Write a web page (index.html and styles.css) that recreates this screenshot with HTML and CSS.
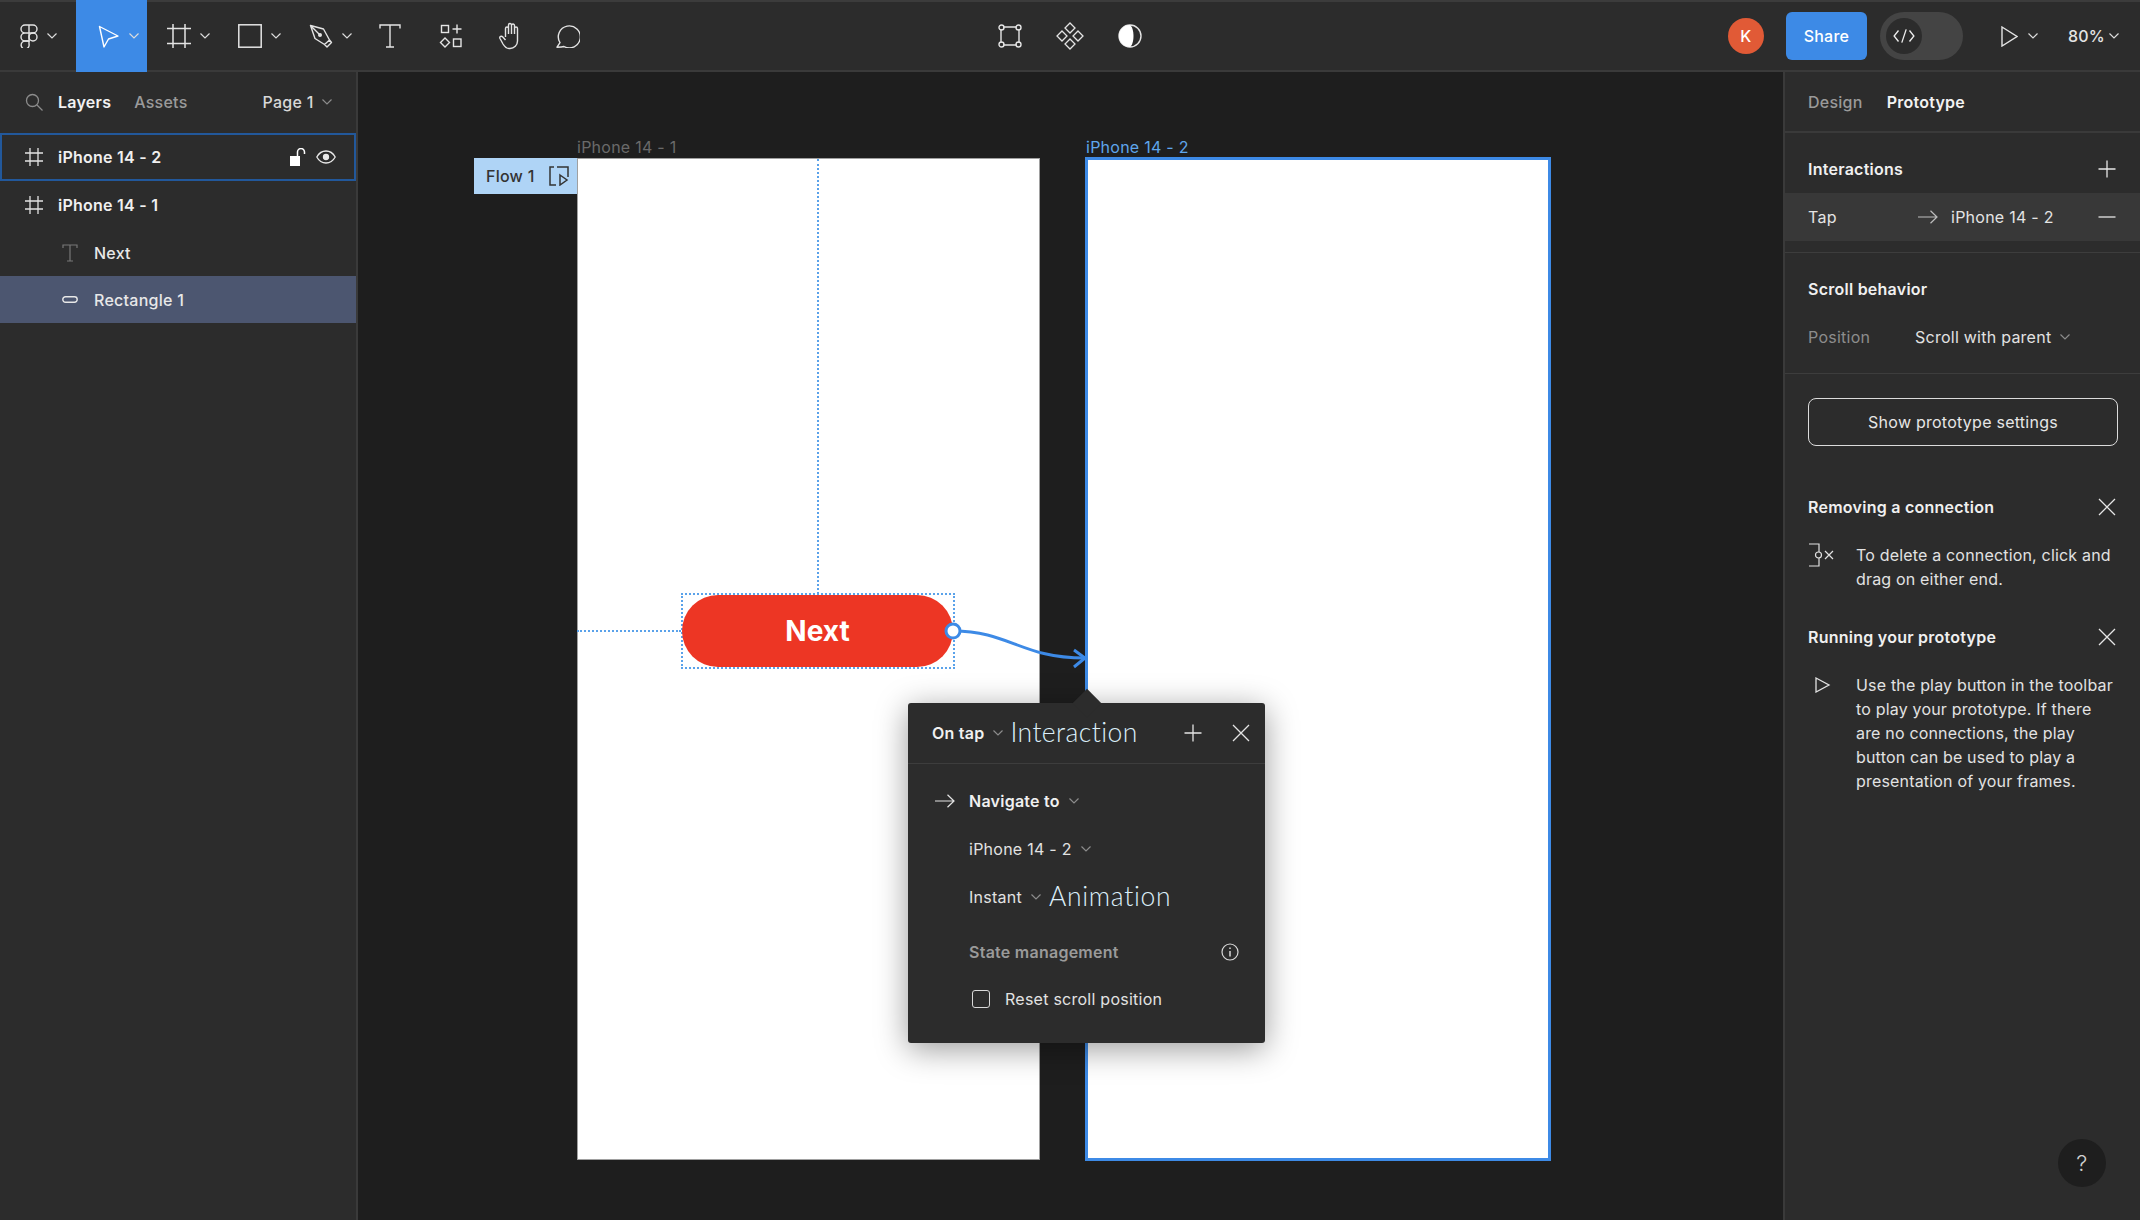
FILE: index.html
```html
<!DOCTYPE html>
<html lang="en">
<head>
<meta charset="utf-8">
<title>Figma prototype</title>
<link rel="stylesheet" href="styles.css">
</head>
<body>
<svg class="sprite" aria-hidden="true">
  <symbol id="chev" viewBox="0 0 10 6"><path d="M.5.5 5 5 9.500.5" fill="none" stroke="currentColor" stroke-width="1.200"/></symbol>
  <symbol id="hash" viewBox="0 0 18 18"><path d="M5 0v18M13 0v18M0 5h18M0 13h18" fill="none" stroke="currentColor" stroke-width="1.300"/></symbol>
  <symbol id="plus" viewBox="0 0 18 18"><path d="M9 .5v17M.5 9h17" fill="none" stroke="currentColor" stroke-width="1.300"/></symbol>
  <symbol id="close" viewBox="0 0 18 18"><path d="M1 1l16 16M17 1 1 17" fill="none" stroke="currentColor" stroke-width="1.300"/></symbol>
  <symbol id="arrow" viewBox="0 0 20 14"><path d="M0 7h19M12.500 .8 19 7l-6.500 6.200" fill="none" stroke="currentColor" stroke-width="1.200"/></symbol>
</svg>
<div class="app">
  <header class="toolbar">
    <div class="tools">
      <div class="tool tool-logo">
        <svg class="ico-logo" viewBox="0 0 18 24" fill="none" stroke="currentColor" stroke-width="1.400"><path d="M9 1H5a4 4 0 0 0 0 8h4zM9 1h4a4 4 0 0 1 0 8H9zM9 9H5a4 4 0 0 0 0 8h4z"/><circle cx="13" cy="13" r="4"/><path d="M5 17h4v3a4 4 0 1 1-4-3z"/></svg>
        <svg class="chev"><use href="#chev"/></svg>
      </div>
      <div class="tool tool-active">
        <svg class="ico" viewBox="0 0 24 24" fill="none" stroke="currentColor" stroke-width="1.400"><path d="M3.500 2.500 22 12l-9.500 3L8 23z" stroke-linejoin="round"/></svg>
        <svg class="chev"><use href="#chev"/></svg>
      </div>
      <div class="tool">
        <svg class="ico" viewBox="0 0 24 24" fill="none" stroke="currentColor" stroke-width="1.500"><path d="M6 0v24M18 0v24M0 4.500h24M0 19.500h24"/></svg>
        <svg class="chev"><use href="#chev"/></svg>
      </div>
      <div class="tool">
        <svg class="ico" viewBox="0 0 24 24" fill="none" stroke="currentColor" stroke-width="1.500"><rect x=".8" y=".8" width="22.400" height="22.400"/></svg>
        <svg class="chev"><use href="#chev"/></svg>
      </div>
      <div class="tool">
        <svg class="ico" viewBox="0 0 24 24" fill="none" stroke="currentColor" stroke-width="1.400"><path d="M1.500 1.500 14.500 5 20.500 16 15.500 20.500 6 14.500zM1.500 1.500 10 10M15.500 20.500l2.500 2.500 4.500-4.500-2-2.500" stroke-linejoin="round"/><circle cx="11" cy="11" r="1.300" fill="currentColor"/></svg>
        <svg class="chev"><use href="#chev"/></svg>
      </div>
      <div class="tool tool-single">
        <svg class="ico" viewBox="0 0 24 24" fill="none" stroke="currentColor" stroke-width="1.400"><path d="M2 4.500V1h20v3.500M12 1v22M8 23h8"/></svg>
      </div>
      <div class="tool tool-single">
        <svg class="ico ico-comp" viewBox="0 0 24 24" fill="none" stroke="currentColor" stroke-width="1.400"><rect x="2.500" y="1.500" width="7" height="7"/><path d="M18 .5v9M13.500 5h9"/><path d="M6 14l4.500 4.500L6 23l-4.500-4.500z"/><rect x="14.500" y="15" width="7.500" height="7.500"/></svg>
      </div>
      <div class="tool tool-single">
        <svg class="ico ico-hand" viewBox="0 0 24 28" fill="none" stroke="currentColor" stroke-width="1.400"><path d="M6.500 15V6.500a1.500 1.500 0 0 1 3 0V12V3a1.500 1.500 0 0 1 3 0v9V3.500a1.500 1.500 0 0 1 3 0V12V6.500a1.500 1.500 0 0 1 3 0V19a7.500 7.500 0 0 1-7.500 7.500h-1c-3 0-4.500-2-6-4.500l-3-5.500c-1-2 1.500-3 2.800-1.500L6.500 18"/></svg>
      </div>
      <div class="tool tool-single">
        <svg class="ico ico-bubble" viewBox="0 0 24 24" fill="none" stroke="currentColor" stroke-width="1.400"><path d="M1 23.200l3-4.500A11 11 0 1 1 8 22.500c-2 .7-4.500.7-7 .7z" stroke-linejoin="round"/></svg>
      </div>
    </div>
    <div class="center-tools">
      <div class="tool tool-single">
        <svg class="ico" viewBox="0 0 24 24" fill="none" stroke="currentColor" stroke-width="1.400"><path d="M5 3h14M5 21h14M3 5v14M21 5v14"/><circle cx="3.500" cy="3.500" r="2.500"/><circle cx="20.500" cy="3.500" r="2.500"/><circle cx="3.500" cy="20.500" r="2.500"/><circle cx="20.500" cy="20.500" r="2.500"/></svg>
      </div>
      <div class="tool tool-single">
        <svg class="ico ico-tall" viewBox="0 0 28 28" fill="none" stroke="currentColor" stroke-width="1.300"><path d="M14 1l5 5-5 5-5-5zM14 17l5 5-5 5-5-5zM6 9l5 5-5 5-5-5zM22 9l5 5-5 5-5-5z"/></svg>
      </div>
      <div class="tool tool-single">
        <svg class="ico" viewBox="0 0 24 24"><circle cx="12" cy="12" r="11" fill="none" stroke="currentColor" stroke-width="1.400"/><path d="M12 1a11 11 0 0 0 0 22c2-1 3.500-6 3.500-11S14 2 12 1z" fill="#fff"/></svg>
      </div>
    </div>
    <div class="right-tools">
      <div class="avatar">K</div>
      <button class="share">Share</button>
      <div class="toggle"><span class="knob"><svg viewBox="0 0 20 14" fill="none" stroke="currentColor" stroke-width="1.200"><path d="M5 2 1 7l4 5M15 2l4 5-4 5M12 1 8 13"/></svg></span></div>
      <div class="play">
        <svg class="ico-play" viewBox="0 0 17 21" fill="none" stroke="currentColor" stroke-width="1.400"><path d="M1 1l15 9.500L1 20z"/></svg>
        <svg class="chev"><use href="#chev"/></svg>
      </div>
      <div class="zoom-level">
        <span>80%</span>
        <svg class="chev"><use href="#chev"/></svg>
      </div>
    </div>
  </header>

  <main class="workspace">
    <aside class="layers">
      <div class="layers-head">
        <svg class="search" viewBox="0 0 18 18" fill="none" stroke="currentColor" stroke-width="1.300"><circle cx="7.500" cy="7.500" r="6"/><path d="M12 12l5.500 5.500"/></svg>
        <span class="tab tab-on">Layers</span>
        <span class="tab tab-off">Assets</span>
        <span class="page">Page 1</span>
        <svg class="chev chev-dim"><use href="#chev"/></svg>
      </div>
      <ul class="layer-list">
        <li class="layer layer-hover">
          <svg class="hash"><use href="#hash"/></svg>
          <span class="layer-name">iPhone 14 - 2</span>
          <svg class="lock" viewBox="0 0 16 18"><rect x="0" y="8" width="10" height="10" fill="#fff"/><path d="M7.500 8V4a3.500 3.500 0 0 1 7 0v2" fill="none" stroke="#fff" stroke-width="1.500"/></svg>
          <svg class="eye" viewBox="0 0 20 14" fill="none" stroke="#e8e8e8" stroke-width="1.300"><path d="M.8 7C3 3 6 1 10 1s7 2 9.200 6c-2.200 4-5.200 6-9.200 6S3 11 .8 7z"/><circle cx="10" cy="7" r="2.500" fill="#e8e8e8"/></svg>
        </li>
        <li class="layer">
          <svg class="hash"><use href="#hash"/></svg>
          <span class="layer-name">iPhone 14 - 1</span>
        </li>
        <li class="layer layer-child">
          <svg class="tee" viewBox="0 0 16 18" fill="none" stroke="currentColor" stroke-width="1.200"><path d="M1 4V1h14v3M8 1v16M5 17h6"/></svg>
          <span class="child-name">Next</span>
        </li>
        <li class="layer layer-child layer-selected">
          <svg class="pill-ico" viewBox="0 0 16 7" fill="none" stroke="currentColor" stroke-width="1.400"><rect x=".8" y=".8" width="14.400" height="5.400" rx="2.700"/></svg>
          <span class="child-name">Rectangle 1</span>
        </li>
      </ul>
    </aside>

    <section class="canvas">
      <span class="frame-label label-one">iPhone 14 - 1</span>
      <span class="frame-label label-two">iPhone 14 - 2</span>
      <div class="flow">
        <span>Flow 1</span>
        <svg viewBox="0 0 20 20" fill="none" stroke="currentColor" stroke-width="1.500"><path d="M8 1h11v10M5 1H1v18h6"/><path d="M11 9l7 5-7 5z"/></svg>
      </div>
      <div class="frame frame-one"></div>
      <div class="frame frame-two"></div>
      <div class="guide guide-v"></div>
      <div class="guide guide-h"></div>
      <div class="select-box"></div>
      <div class="next-btn">Next</div>
      <svg class="connector" viewBox="0 0 1424 1148" fill="none">
        <path d="M595 559C652 559 662 586 727 586" stroke="#3d8ae6" stroke-width="3"/>
        <path d="M716 578l11 8-11 9" stroke="#3d8ae6" stroke-width="3"/>
        <circle cx="595" cy="559" r="7" fill="#fff" stroke="#3d8ae6" stroke-width="3"/>
      </svg>
      <div class="popover">
        <div class="pop-head">
          <span class="strong">On tap</span>
          <svg class="chev chev-dim pop-chev"><use href="#chev"/></svg>
          <span class="note">Interaction</span>
          <svg class="pop-plus"><use href="#plus"/></svg>
          <svg class="pop-close"><use href="#close"/></svg>
        </div>
        <div class="pop-body">
          <div class="pop-row">
            <svg class="pop-arrow"><use href="#arrow"/></svg>
            <span class="strong">Navigate to</span>
            <svg class="chev chev-dim"><use href="#chev"/></svg>
          </div>
          <div class="pop-row pop-indent">
            <span>iPhone 14 - 2</span>
            <svg class="chev chev-dim"><use href="#chev"/></svg>
          </div>
          <div class="pop-row pop-indent">
            <span>Instant</span>
            <svg class="chev chev-dim"><use href="#chev"/></svg>
            <span class="note note-anim">Animation</span>
          </div>
          <div class="pop-row pop-indent pop-state">
            <span class="state-title">State management</span>
            <svg class="info" viewBox="0 0 18 18" fill="none" stroke="currentColor" stroke-width="1.200"><circle cx="9" cy="9" r="8"/><path d="M9 8v5.500M9 4.500v1.500" stroke-width="1.500"/></svg>
          </div>
          <div class="pop-row pop-check">
            <span class="checkbox"></span>
            <span>Reset scroll position</span>
          </div>
        </div>
      </div>
    </section>

    <aside class="props">
      <div class="props-head">
        <span class="tab tab-off">Design</span>
        <span class="tab tab-on">Prototype</span>
      </div>
      <section class="block block-inter">
        <div class="block-title"><span>Interactions</span><svg class="icon-btn"><use href="#plus"/></svg></div>
        <div class="tap-row">
          <span class="tap-name">Tap</span>
          <svg class="tap-arrow"><use href="#arrow"/></svg>
          <span class="tap-target">iPhone 14 - 2</span>
          <svg class="tap-minus" viewBox="0 0 18 2"><path d="M.5 1h17" stroke="currentColor" stroke-width="1.300"/></svg>
        </div>
      </section>
      <section class="block block-scroll">
        <div class="block-title"><span>Scroll behavior</span></div>
        <div class="pos-row">
          <span class="pos-label">Position</span>
          <span class="pos-value">Scroll with parent</span>
          <svg class="chev chev-dim"><use href="#chev"/></svg>
        </div>
      </section>
      <section class="block-btn">
        <button class="outline">Show prototype settings</button>
      </section>
      <section class="tip">
        <div class="block-title"><span>Removing a connection</span><svg class="icon-btn"><use href="#close"/></svg></div>
        <div class="tip-body">
          <svg class="tip-ico tip-conn" viewBox="0 0 28 24" fill="none" stroke="currentColor" stroke-width="1.200"><path d="M1 1h10v8M11 15v8H1"/><circle cx="10.500" cy="12" r="3"/><path d="M17 8l8 8M25 8l-8 8"/></svg>
          <p>To delete a connection, click and drag on either end.</p>
        </div>
      </section>
      <section class="tip">
        <div class="block-title"><span>Running your prototype</span><svg class="icon-btn"><use href="#close"/></svg></div>
        <div class="tip-body">
          <svg class="tip-ico tip-play" viewBox="0 0 16 16" fill="none" stroke="currentColor" stroke-width="1.300"><path d="M1 1l13 7-13 7z"/></svg>
          <p>Use the play button in the toolbar to play your prototype. If there are no connections, the play button can be used to play a presentation of your frames.</p>
        </div>
      </section>
      <div class="help">?</div>
    </aside>
  </main>
</div>
</body>
</html>
```
FILE: styles.css
```css
* { box-sizing: border-box; }
html, body { margin: 0; height: 100%; }
body {
  background: #1e1e1e;
  color: #e6e6e6;
  font-family: Inter, "Liberation Sans", sans-serif;
  font-size: 16px;
  letter-spacing: .25px;
  overflow: hidden;
}
.sprite { position: absolute; width: 0; height: 0; }
.app { width: 2140px; height: 1220px; display: flex; flex-direction: column; }

.toolbar {
  height: 72px;
  flex: none;
  display: grid;
  grid-template-columns: 1fr auto 1fr;
  background: #2c2c2c;
  border-top: 2px solid #3c3c3c;
  border-bottom: 2px solid #3a3a3a;
  color: #e4e4e4;
}
.tools, .center-tools, .right-tools { display: flex; align-items: stretch; }
.tool { width: 71px; display: flex; align-items: center; padding-left: 20px; gap: 9px; }
.tool-logo { width: 76px; padding-left: 20px; gap: 9px; }
.tool-active { background: #3d8ae6; color: #fff; margin-top: -2px; margin-bottom: -2px; }
.tool-single { width: 60px; padding-left: 18px; }
.ico { width: 24px; height: 24px; flex: none; }
.ico-comp { margin-left: 1px; }
.ico-hand { height: 28px; margin-left: 1px; }
.ico-bubble { margin-left: -2px; }
.ico-tall { height: 28px; width: 28px; margin-left: -2px; }
.ico-logo { width: 18px; height: 24px; flex: none; }
.chev { width: 10px; height: 6px; flex: none; color: #dcdcdc; }
.chev-dim { color: #8c8c8c; }

.right-tools { align-items: center; justify-content: flex-end; padding-right: 21px; }
.avatar {
  width: 36px; height: 36px; border-radius: 50%;
  background: #e15a36; color: #fff;
  display: flex; align-items: center; justify-content: center;
  font-weight: 500; font-size: 16px;
}
.share {
  width: 81px; height: 48px; margin-left: 22px;
  border: 0; border-radius: 6px;
  background: #3d8ae6; color: #fff;
  font: 500 16px Inter, sans-serif;
  letter-spacing: .25px;
}
.toggle {
  width: 83px; height: 48px; margin-left: 13px;
  border-radius: 24px; background: #444;
  display: flex; align-items: center; padding-left: 6px;
}
.knob {
  width: 36px; height: 36px; border-radius: 50%;
  background: #2c2c2c; color: #eee;
  display: flex; align-items: center; justify-content: center;
}
.knob svg { width: 22px; height: 16px; }
.play { display: flex; align-items: center; gap: 10px; margin-left: 38px; }
.ico-play { width: 17px; height: 21px; }
.zoom-level { display: flex; align-items: center; gap: 4px; margin-left: 30px; font-weight: 500; }

.workspace { flex: 1; display: flex; min-height: 0; }

.layers {
  width: 358px; flex: none;
  background: #2c2c2c;
  border-right: 2px solid #3a3a3a;
}
.layers-head {
  height: 61px;
  display: flex; align-items: center;
  padding-left: 25px;
  padding-bottom: 1px;
}
.search { width: 18px; height: 18px; color: #8c8c8c; flex: none; }
.tab { font-weight: 600; }
.tab-on { color: #f2f2f2; }
.tab-off { color: #9a9a9a; font-weight: 500; }
.layers-head .tab-on { margin-left: 15px; }
.layers-head .tab-off { margin-left: 23px; }
.page { margin-left: 75px; margin-right: 8px; font-weight: 500; color: #d8d8d8; }

.layer-list { list-style: none; margin: 0; padding: 0; }
.layer { height: 48px; display: flex; align-items: center; padding-left: 25px; }
.layer-hover { box-shadow: inset 0 0 0 2px #22589b; }
.hash { width: 18px; height: 18px; flex: none; color: #e2e2e2; }
.layer-name { margin-left: 15px; font-weight: 600; color: #f0f0f0; }
.lock { width: 16px; height: 18px; margin-left: auto; }
.eye { width: 20px; height: 14px; margin-left: 10px; margin-right: 20px; }
.layer-child { padding-left: 62px; height: 47px; }
.tee { width: 16px; height: 18px; color: #777; flex: none; }
.pill-ico { width: 16px; height: 7px; color: #e8e8e8; flex: none; }
.child-name { margin-left: 16px; font-weight: 500; color: #e8e8e8; }
.layer-selected { background: #4c5670; }

.canvas { flex: 1; position: relative; background: #1e1e1e; overflow: hidden; }
.frame-label { position: absolute; top: 65px; line-height: 20px; color: #6a6a6a; }
.label-one { left: 219px; }
.label-two { left: 728px; color: #5ea6ec; }
.flow {
  position: absolute; left: 116px; top: 86px;
  width: 103px; height: 36px;
  background: #afd4f6; color: #333;
  display: flex; align-items: center;
  padding-left: 12px; gap: 14px;
  font-weight: 500;
}
.flow svg { width: 20px; height: 20px; flex: none; }
.frame { position: absolute; background: #fff; }
.frame-one { left: 219px; top: 86px; width: 463px; height: 1002px; border: 1px solid #a0a0a0; }
.frame-two { left: 727px; top: 85px; width: 466px; height: 1004px; border: 3px solid #3d8ae6; }
.guide { position: absolute; border: 0 dotted #5aa2ea; }
.guide-v { left: 459px; top: 87px; height: 435px; border-left-width: 2px; }
.guide-h { left: 219px; top: 558px; width: 104px; border-top-width: 2px; }
.select-box {
  position: absolute; left: 323px; top: 521px;
  width: 274px; height: 76px;
  border: 2px dotted #5aa2ea;
}
.next-btn {
  position: absolute; left: 324px; top: 523px;
  width: 271px; height: 72px; border-radius: 36px;
  background: #ed3624; color: #fff;
  display: flex; align-items: center; justify-content: center;
  font-size: 28px; font-weight: 700; letter-spacing: 0;
}
.connector { position: absolute; left: 0; top: 0; width: 1424px; height: 1148px; }

.popover {
  position: absolute; left: 550px; top: 631px;
  width: 357px; height: 340px;
  background: #2c2c2c; border-radius: 3px;
  box-shadow: 0 6px 32px rgba(0, 0, 0, .4);
}
.popover::before {
  content: ""; position: absolute; left: 169px; top: -10px;
  width: 20px; height: 20px; background: #2c2c2c;
  transform: rotate(45deg);
}
.pop-head {
  position: relative;
  height: 61px; display: flex; align-items: center;
  padding-left: 24px;
  border-bottom: 1px solid #3d3d3d;
}
.strong { font-weight: 600; color: #f0f0f0; }
.pop-chev { margin-left: 8px; }
.note { font-weight: 300; font-family: Lato, sans-serif; font-size: 26.500px; line-height: 32px; color: #dceffa; letter-spacing: .4px; }
.pop-head .note { margin-left: 8px; margin-top: -2px; }
.pop-plus { width: 18px; height: 18px; margin-left: auto; color: #e4e4e4; flex: none; }
.pop-close { width: 18px; height: 18px; margin-left: 30px; margin-right: 15px; color: #e4e4e4; flex: none; }
.pop-body { padding-top: 13px; }
.pop-row { height: 48px; display: flex; align-items: center; gap: 9px; color: #e2e2e2; }
.pop-row:first-child { padding-left: 27px; }
.pop-arrow { width: 20px; height: 14px; margin-right: 5px; flex: none; color: #e4e4e4; }
.pop-indent { padding-left: 61px; }
.note-anim { margin-left: -1px; margin-top: -2px; letter-spacing: .7px; }
.pop-state { margin-top: 7px; justify-content: space-between; padding-right: 26px; color: #9a9a9a; }
.state-title { font-weight: 600; }
.info { width: 18px; height: 18px; color: #d8d8d8; }
.pop-check { padding-left: 64px; gap: 15px; margin-top: -1px; }
.checkbox { width: 18px; height: 18px; border: 1.500px solid #d8d8d8; border-radius: 3px; flex: none; }

.props {
  width: 357px; flex: none; position: relative;
  background: #2c2c2c;
  border-left: 2px solid #3a3a3a;
}
.props-head {
  height: 61px; display: flex; align-items: center; gap: 24px;
  padding-left: 23px;
  border-bottom: 2px solid #3a3a3a;
}
.block { border-bottom: 1px solid #3d3d3d; }
.block-inter { height: 120px; padding-top: 12px; }
.block-scroll { height: 121px; padding-top: 12px; }
.block-title {
  height: 48px; display: flex; align-items: center; justify-content: space-between;
  padding: 0 24px 0 23px;
  font-weight: 600; color: #f0f0f0;
}
.icon-btn { width: 18px; height: 18px; flex: none; color: #e6e6e6; }
.tap-row {
  height: 48px; display: flex; align-items: center;
  padding: 0 24px 0 23px;
  background: #383838; color: #e4e4e4;
}
.tap-name { width: 110px; }
.tap-arrow { width: 20px; height: 14px; color: #bdbdbd; flex: none; }
.tap-target { margin-left: 13px; }
.tap-minus { width: 18px; height: 2px; margin-left: auto; color: #e6e6e6; }
.pos-row { height: 48px; display: flex; align-items: center; padding-left: 23px; }
.pos-label { width: 107px; color: #8c8c8c; }
.pos-value { margin-right: 9px; color: #e2e2e2; }
.block-btn { padding: 24px 23px 0; height: 109px; }
.outline {
  width: 310px; height: 48px;
  background: transparent; color: #e6e6e6;
  border: 1.500px solid #dcdcdc; border-radius: 8px;
  font: 400 16px Inter, sans-serif;
  letter-spacing: .25px;
}
.tip { padding-bottom: 22px; }
.tip-body { display: flex; padding: 12px 0 0 23px; }
.tip-ico { flex: none; color: #e2e2e2; }
.tip-conn { width: 28px; height: 24px; margin-right: 20px; }
.tip-play { width: 16px; height: 16px; margin: 4px 25px 0 7px; }
.tip-body p {
  margin: 0; width: 264px;
  line-height: 24px; color: #e2e2e2;
  letter-spacing: .18px;
}
.help {
  position: absolute; right: 34px; bottom: 33px;
  width: 48px; height: 48px; border-radius: 50%;
  background: #1e1e1e; color: #d0d0d0;
  display: flex; align-items: center; justify-content: center;
  font-size: 22px; font-weight: 300;
}
```
